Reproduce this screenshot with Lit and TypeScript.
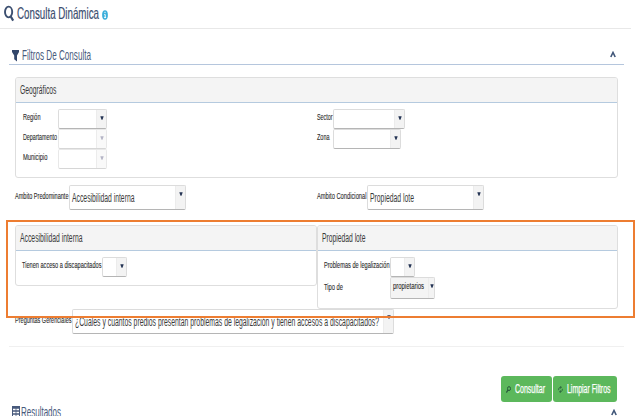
import { LitElement, html, css, svg } from "lit";
import { customElement } from "lit/decorators.js";

/** Condensed text: fitted to the given width; the box is 12px high with the baseline at 10px. */
const fit = (text: string, width: number, cls = "label") => html`
  <svg class="fit ${cls}" width=${width} height="12">
    <text x="0" y="10" textLength=${width} lengthAdjust="spacingAndGlyphs">${text}</text>
  </svg>`;

const caret = svg`<path d="M.3 .3H3.7L2.5 3.7H1.5Z" fill="currentColor"/>`;

const select = (cls: string, text = "", width = 0, textCls = "value") => html`
  <div class="select ${cls}">
    <div class="field">${text ? fit(text, width, textCls) : ""}</div>
    <div class="drop"><svg width="4" height="4">${caret}</svg></div>
  </div>`;

const chevron = html`<svg class="chevron" width="6" height="7" viewBox="0 0 6 7">
  <path d="M.8 6L3 1.5L5.2 6" fill="none" stroke="#3f5578" stroke-width="1.6"/></svg>`;

@customElement("app-root")
export class AppRoot extends LitElement {
  static styles = css`
    :host { display: block; position: relative; width: 635px; height: 416px; overflow: hidden;
      background: #fff; font-family: "Liberation Sans", Arial, sans-serif; }
    * { box-sizing: border-box; }
    svg { display: block; flex: none; }
    .fit { overflow: visible; }
    .label { font-size: 9px; fill: #2c2c2c; stroke: #2c2c2c; stroke-width: .12px; }
    .value, .head { font-size: 12px; fill: #3a3a3a; }
    .title { font-size: 16.5px; fill: #3c4f70; stroke: #3c4f70; stroke-width: .2px; }
    .section { font-size: 14.5px; fill: #485a7c; }
    .btntext { font-size: 12px; fill: #fff; stroke: #fff; stroke-width: .25px; }
    .top { display: flex; height: 29px; width: 631px; border-bottom: 1px solid #e8e8e8; padding: 5px 0 0 4px; }
    .top .title { margin: 4px 3px 0 2px; }
    .top .info { margin-top: 5px; }
    .bar { display: flex; height: 36px; margin: 0 11px 0 9px; border-bottom: 1px solid #b5c6dd; padding: 21px 8px 0 3px; }
    .bar .section { margin: 0 0 0 3px; }
    .chevron { margin-left: auto; margin-top: 1px; }
    .content { padding: 12px 17px 0 15px; }
    .panel { border: 1px solid #dedede; border-radius: 3px; background: #fff; }
    .panel > header { height: 25px; background: #f4f4f4; border-bottom: 1px solid #b5cadf; padding: 6px 0 0 4px; border-radius: 2px 2px 0 0; }
    .geo { height: 101px; }
    .cols { display: grid; grid-template-columns: 294px 1fr; padding: 6px 0 0 7px; }
    .row { display: flex; height: 20px; }
    .row > .label, .cell .label, .cell66 .label { margin-top: 1px; }
    .cell { width: 35px; flex: none; }
    .cell.sec { width: 16px; }
    .cell66 { width: 66px; flex: none; }
    .cell66 .low { margin-top: 3px; }
    .select { display: flex; height: 20px; border: 1px solid #dcdcdc; border-bottom-color: #b5b5b5; border-radius: 2px; background: #fff; color: #253454; flex: none; }
    .field { flex: 1; min-width: 0; padding: 6px 0 0 2px; }
    .drop { width: 10px; flex: none; background: #f3f3f3; border-left: 1px solid #ececec; padding: 6px 0 0 3px; }
    .w49 { width: 49px; } .w72 { width: 72px; } .w68 { width: 68px; } .w25 { width: 25px; }
    .off { color: #b5b5c6; border-color: #e8e8e8; border-bottom-color: #d6d6d6; }
    .off .drop { background: #f9f9f9; }
    .tall { height: 25px; }
    .w117 { width: 117px; }
    .w322 { width: 322px; }
    .gray { width: 45px; height: 22px; background: #f4f4f4; }
    .gray .field { padding-top: 1px; }
    .gray .drop { width: 6px; padding-left: 1px; }
    .scope { display: grid; grid-template-columns: 302px 1fr; height: 47px; padding-top: 7px; }
    .scope > div, .question { display: flex; }
    .scope .tall, .question .tall { margin-left: .5px; }
    .scope .label { margin-top: 4px; }
    .pair { display: flex; align-items: flex-start; height: 84px; }
    .inner { width: 302px; height: 61px; }
    .prop { width: 301px; height: 84px; }
    .body { padding: 6px 0 0 6px; }
    .question .label { margin-top: 4px; }
    .frame { position: absolute; left: 6px; top: 220px; width: 629px; height: 98px; border: 2px solid #ed7d31; }
    hr { border: 0; height: 1px; background: #f0f0f0; margin: 12px 11px 0 9px; }
    .actions { display: flex; justify-content: flex-end; gap: 1px; margin-top: 29px; padding-right: 18px; }
    .btn { display: flex; height: 26px; border: 0; border-radius: 3px; background: #5cb85c; padding: 7px 0 0 5px; }
    .b1 { width: 51px; } .b2 { width: 64px; }
    .btn svg:first-child { margin: 3px 4px 0 0; }
    .question .drop { padding-top: 5px; }
    .results { display: flex; height: 15px; padding: 4px 18px 0 12px; }
    .results .section { margin: 1px 0 0 1px; }
    .results .chevron { margin-top: 3px; }
  `;

  render() {
    return html`
      <div class="top">
        <svg width="11" height="17" viewBox="0 0 11 17">
          <ellipse cx="4.6" cy="7" rx="3.6" ry="5.4" fill="none" stroke="#3c4f70" stroke-width="1.9"/>
          <path d="M6.6 11.3L9.2 15.6" stroke="#3c4f70" stroke-width="2.2"/>
        </svg>
        ${fit("Consulta Dinámica", 82, "title")}
        <svg class="info" width="6" height="10" viewBox="0 0 6 10">
          <ellipse cx="3" cy="5" rx="2.9" ry="4.8" fill="#3aaedb"/>
          <path d="M3 1.8V3.1M2.3 4.5H3.2V7.5M2.1 7.6H4.1" fill="none" stroke="#fff" stroke-width="1"/>
        </svg>
      </div>
      <div class="bar">
        <svg width="7" height="12" viewBox="0 0 7 12"><path d="M0 0H7V2L5 5.4V11.5L2.2 9.3V5.4L0 2Z" fill="#33476b"/></svg>
        ${fit("Filtros De Consulta", 69, "section")}
        ${chevron}
      </div>
      <div class="content">
        <div class="panel geo">
          <header>${fit("Geográficos", 36.5, "head")}</header>
          <div class="cols">
            <div>
              <div class="row"><div class="cell">${fit("Región", 17.5)}</div>${select("w49")}</div>
              <div class="row"><div class="cell">${fit("Departamento", 34)}</div>${select("w49 off")}</div>
              <div class="row"><div class="cell">${fit("Municipio", 24.5)}</div>${select("w49 off")}</div>
            </div>
            <div>
              <div class="row"><div class="cell sec">${fit("Sector", 15.5)}</div>${select("w72")}</div>
              <div class="row"><div class="cell sec">${fit("Zona", 12.5)}</div>${select("w68")}</div>
            </div>
          </div>
        </div>
        <div class="scope">
          <div>${fit("Ambito Predominante", 53.5)}${select("tall w117", "Accesibilidad interna", 62.5)}</div>
          <div>${fit("Ambito Condicional", 49.5)}${select("tall w117", "Propiedad lote", 44)}</div>
        </div>
        <div class="pair">
          <div class="panel inner">
            <header>${fit("Accesibilidad interna", 62.5, "head")}</header>
            <div class="body"><div class="row">${fit("Tienen acceso a discapacitados", 79.5)}${select("w25")}</div></div>
          </div>
          <div class="panel prop">
            <header>${fit("Propiedad lote", 43.5, "head")}</header>
            <div class="body">
              <div class="row"><div class="cell66">${fit("Problemas de legalización", 65.5)}</div>${select("w25")}</div>
              <div class="row"><div class="cell66">${fit("Tipo de", 19, "label low")}</div>${select("gray", "propietarios", 31, "label")}</div>
            </div>
          </div>
        </div>
        <div class="question">${fit("Preguntas Gerenciales", 56.5)}${select("tall w322", "¿Cuales y cuantos predios presentan problemas de legalización y tienen accesos a discapacitados?", 304)}</div>
      </div>
      <hr />
      <div class="actions">
        <button class="btn b1">
          <svg width="5" height="7" viewBox="0 0 5 7"><ellipse cx="3" cy="2.6" rx="1.5" ry="2" fill="none" stroke="#285a3c"/><path d="M2 4L.4 6.6" stroke="#285a3c" stroke-width="1.2"/></svg>
          ${fit("Consultar", 30, "btntext")}
        </button>
        <button class="btn b2">
          <svg width="5" height="7" viewBox="0 0 5 7"><path d="M.7 4.2V2.8Q1 1.2 3 1.4M4.3 2.8V4.2Q4 5.8 2 5.6M2.4 0L3.4 1.4L2.4 2.6M2.6 4.4L1.6 5.6L2.6 7" fill="none" stroke="#285a3c" stroke-width=".8"/></svg>
          ${fit("Limpiar Filtros", 43.5, "btntext")}
        </button>
      </div>
      <div class="results">
        <svg width="8" height="12" viewBox="0 0 8 12"><path d="M0 0H8V12H0Z" fill="#485a7c"/><path d="M1 3.5H3.6M4.4 3.5H7M1 6.5H3.6M4.4 6.5H7M1 9.5H3.6M4.4 9.5H7" stroke="#fff" stroke-width="1.5"/></svg>
        ${fit("Resultados", 40, "section")}
        ${chevron}
      </div>
      <div class="frame"></div>
    `;
  }
}
